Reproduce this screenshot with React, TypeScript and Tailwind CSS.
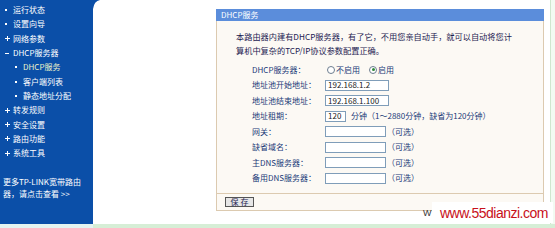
import React from 'react';

type MenuItem = { icon: 'dot' | 'plus' | 'minus'; label: string; sub?: boolean; active?: boolean };

const menu: MenuItem[] = [
  { icon: 'dot', label: '运行状态' },
  { icon: 'dot', label: '设置向导' },
  { icon: 'plus', label: '网络参数' },
  { icon: 'minus', label: 'DHCP服务器' },
  { icon: 'dot', label: 'DHCP服务', sub: true, active: true },
  { icon: 'dot', label: '客户端列表', sub: true },
  { icon: 'dot', label: '静态地址分配', sub: true },
  { icon: 'plus', label: '转发规则' },
  { icon: 'plus', label: '安全设置' },
  { icon: 'plus', label: '路由功能' },
  { icon: 'plus', label: '系统工具' },
];

const cjk = "font-['SimSun','Noto_Sans_CJK_SC',sans-serif]";

function MenuIcon({ kind }: { kind: MenuItem['icon'] }) {
  if (kind === 'dot') return <span className="block h-[2px] w-[2px] bg-white" />;
  if (kind === 'minus') return <span className="block h-[1px] w-[4px] bg-white" />;
  return (
    <span className="relative block h-[5px] w-[5px]">
      <span className="absolute left-0 top-[2px] h-[1px] w-[5px] bg-white" />
      <span className="absolute left-[2px] top-0 h-[5px] w-[1px] bg-white" />
    </span>
  );
}

function Sidebar() {
  return (
    <aside className={`w-[93px] shrink-0 bg-[#0b4fa8] pt-[3px] text-[8px] text-white ${cjk}`}>
      {menu.map((item) => (
        <div
          key={item.label}
          className={`flex h-[14.3px] items-center ${item.sub ? 'pl-[15px]' : 'pl-[5px]'}`}
        >
          <span className="flex w-[8px] items-center">
            <MenuIcon kind={item.icon} />
          </span>
          <span className={item.active ? 'text-[#eef2c8]' : ''}>{item.label}</span>
        </div>
      ))}
      <div className="mt-[16px] pl-[3px] leading-[11.5px]">
        <div>更多TP-LINK宽带路由</div>
        <div>器，请点击查看 &gt;&gt;</div>
      </div>
    </aside>
  );
}

function Radio({ checked }: { checked?: boolean }) {
  return (
    <span className="mr-[1px] flex h-[8px] w-[8px] items-center justify-center rounded-full border border-[#6d7d8f] bg-white">
      {checked && <span className="h-[3px] w-[3px] rounded-full bg-[#2f8a3a]" />}
    </span>
  );
}

function Field({ width, value }: { width: string; value?: string }) {
  return (
    <span
      className={`flex h-[11px] items-center border border-[#7f9db9] bg-white pl-[2px] text-[8px] text-[#222] ${width}`}
    >
      {value}
    </span>
  );
}

function Row({ label, children }: { label: string; children: React.ReactNode }) {
  return (
    <div className="flex h-[15.5px] items-center">
      <span className="w-[73px] shrink-0">{label}</span>
      <div className="flex items-center">{children}</div>
    </div>
  );
}

const optional = <span className="ml-[1px]">（可选）</span>;

function DhcpPanel() {
  return (
    <div className={`w-[328px] text-[8px] ${cjk}`}>
      <div className="h-[12px] bg-[#5b8ddb] pl-[5px] text-[8px] leading-[12px] text-white">DHCP服务</div>
      <div className="border-x border-b border-[#dccab0] bg-[#fcf9f4]">
        <div className="px-[19px] pt-[8px] text-[8.2px] leading-[14px] text-[#1c2252]">
          <p>本路由器内建有DHCP服务器，有了它，不用您亲自动手，就可以自动将您计</p>
          <p>算机中复杂的TCP/IP协议参数配置正确。</p>
        </div>
        <div className="mt-[5px] pb-[7px] pl-[35px] text-[#223a78]">
          <Row label="DHCP服务器：">
            <span className="ml-[2px] flex items-center">
              <Radio />
              不启用
            </span>
            <span className="ml-[9px] flex items-center">
              <Radio checked />
              启用
            </span>
          </Row>
          <Row label="地址池开始地址：">
            <Field width="w-[64px]" value="192.168.1.2" />
          </Row>
          <Row label="地址池结束地址：">
            <Field width="w-[64px]" value="192.168.1.100" />
          </Row>
          <Row label="地址租期：">
            <Field width="w-[21px]" value="120" />
            <span className="ml-[5px]">分钟（1～2880分钟，缺省为120分钟）</span>
          </Row>
          <Row label="网关：">
            <Field width="w-[61px]" />
            {optional}
          </Row>
          <Row label="缺省域名：">
            <Field width="w-[61px]" />
            {optional}
          </Row>
          <Row label="主DNS服务器：">
            <Field width="w-[61px]" />
            {optional}
          </Row>
          <Row label="备用DNS服务器：">
            <Field width="w-[61px]" />
            {optional}
          </Row>
        </div>
        <div className="border-t border-[#dccab0] px-[8px] pb-[3px] pt-[3px]">
          <button className="flex h-[10px] w-[29px] items-center justify-center border border-[#555] bg-[#e6e6e6] text-[8px] leading-none text-[#1c2252]">
            保 存
          </button>
        </div>
      </div>
    </div>
  );
}

export default function App() {
  return (
    <div className="relative flex h-[228px] w-[555px] flex-col overflow-hidden bg-white">
      <div className="flex h-[224px]">
        <Sidebar />
        <main className="relative flex-1 border-r border-[#cfe6cf] pl-[123px] pt-[9px]">
          <svg className="absolute left-0 top-0" width="7" height="9" viewBox="0 0 7 9">
            <path d="M0 0 H7 Q1 1 0 9 Z" fill="#0b4fa8" />
          </svg>
          <DhcpPanel />
        </main>
        <div className="w-[4px] bg-[#f2faf2]" />
      </div>
      <div className="flex h-[4px]">
        <div className="w-[93px] bg-[#e4f5f2]" />
        <div className="flex-1 bg-[#d6eed6]" />
      </div>
      <span className="absolute left-[423px] top-[207px] font-['Liberation_Sans',sans-serif] text-[9px] text-[#333]">W</span>
      <div className="absolute left-[432px] top-[202px] flex h-[21px] w-[121px] items-center bg-white pl-[8px] font-['Liberation_Sans',sans-serif] text-[14px] leading-none tracking-[-0.5px] text-[#c8101a]">
        www.55dianzi.com
      </div>
    </div>
  );
}
